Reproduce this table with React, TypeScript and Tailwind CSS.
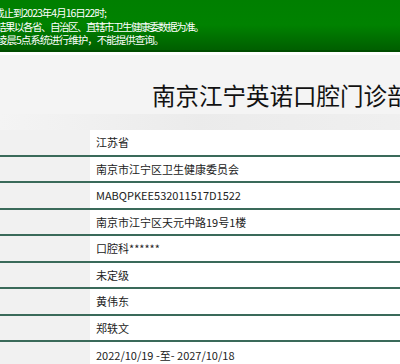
import React from 'react';

const rows: string[] = [
  '江苏省',
  '南京市江宁区卫生健康委员会',
  'MABQPKEE532011517D1522',
  '南京市江宁区天元中路19号1楼',
  '口腔科******',
  '未定级',
  '黄伟东',
  '郑轶文',
  '2022/10/19 -至- 2027/10/18',
];

const App: React.FC = () => {
  return (
    <div
      className="w-[400px] h-[364px] overflow-hidden bg-[#f3f3f3]"
      style={{ fontFamily: '"Noto Sans CJK SC", "Noto Sans", sans-serif' }}
    >
      {/* Notice banner */}
      <div className="h-[52px] overflow-hidden bg-gradient-to-b from-[#007f00] via-[#008200] to-[#005f00] border-b-2 border-[#004c00]">
        <div className="pt-[6px] text-[10.5px] leading-[13.5px] tracking-[-1px] text-white whitespace-nowrap">
          <p className="ml-[-6px]">截止到2023年4月16日22时;</p>
          <p className="ml-[-4px] tracking-[-1.5px]">结果以各省、自治区、直辖市卫生健康委数据为准。</p>
          <p className="ml-[-3px]">凌晨5点系统进行维护，不能提供查询。</p>
        </div>
      </div>

      {/* Title */}
      <div className="relative h-[78px] bg-[#f4f4f4] border-t-[3px] border-white">
        <div className="absolute inset-x-0 bottom-0 h-[16px] bg-gradient-to-r from-[#f4f4f4] via-[#e9e9e9] to-[#eeeeee] opacity-80" />
        <h1 className="relative pl-[152px] pt-[25px] text-[23.5px] leading-[30px] text-[#111] whitespace-nowrap">
          南京江宁英诺口腔门诊部
        </h1>
      </div>

      {/* Info table */}
      <div className="flex flex-col">
        {rows.map((value, i) => (
          <div
            key={i}
            className={`grid grid-cols-[90px_1fr] h-[26.5px] ${
              i < rows.length - 1 ? 'border-b-2 border-[#3a6a5a]' : ''
            }`}
          >
            <div className="bg-[#f1f1f1]" />
            <div className="bg-white pl-[6px] flex items-center text-[11px] text-[#222] whitespace-nowrap">
              {value}
            </div>
          </div>
        ))}
      </div>
    </div>
  );
};

export default App;
